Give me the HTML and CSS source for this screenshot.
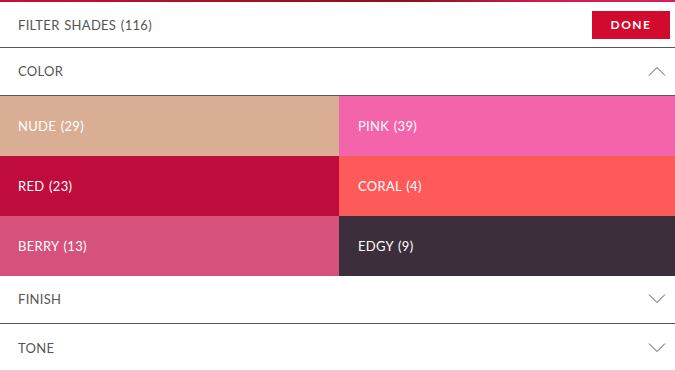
FILE: index.html
```html
<!DOCTYPE html>
<html lang="en">
<head>
    <meta charset="UTF-8">
    <meta name="viewport" content="width=device-width, initial-scale=1.0">
    <title>Filter Shades</title>
    <link rel="stylesheet" href="styles.css">
</head>
<body>
    <div class="strip"></div>
    <header class="top">
        <span class="label">FILTER SHADES (116)</span>
        <button class="done">DONE</button>
    </header>
    <div class="section">
        <span class="label">COLOR</span>
        <svg class="chev" width="18" height="10" viewBox="0 0 18 10"><polyline points="1,9.5 9,1.5 17,9.5" fill="none" stroke="#555" stroke-width="1"/></svg>
    </div>
    <div class="swatches">
        <div class="swatch nude">NUDE (29)</div>
        <div class="swatch pink">PINK (39)</div>
        <div class="swatch red">RED (23)</div>
        <div class="swatch coral">CORAL (4)</div>
        <div class="swatch berry">BERRY (13)</div>
        <div class="swatch edgy">EDGY (9)</div>
    </div>
    <div class="section">
        <span class="label">FINISH</span>
        <svg class="chev" width="18" height="10" viewBox="0 0 18 10"><polyline points="1,0.5 9,8.5 17,0.5" fill="none" stroke="#555" stroke-width="1"/></svg>
    </div>
    <div class="section last">
        <span class="label">TONE</span>
        <svg class="chev" width="18" height="10" viewBox="0 0 18 10"><polyline points="1,0.5 9,8.5 17,0.5" fill="none" stroke="#555" stroke-width="1"/></svg>
    </div>
</body>
</html>
```
FILE: styles.css
```css
*{
    box-sizing: border-box;
    margin: 0;
    padding: 0;
}
body{
    background-color: white;
    color: #555;
    font-family: Lato, "Open Sans", sans-serif;
    font-size: 13px;
    letter-spacing: 0.3px;
    word-spacing: 1px;
}
.strip{
    height: 2px;
    background: linear-gradient(to right, #c8103c, #a01020 40%, #8a1018 60%, #d01a50 80%, #d8205a);
}
.top{
    height: 46px;
    display: flex;
    align-items: center;
    justify-content: space-between;
    padding: 0 5px 0 18px;
    border-bottom: 1px solid #555;
}
.done{
    width: 78px;
    height: 28px;
    background-color: #d20a2e;
    color: white;
    border: none;
    font-family: Lato, sans-serif;
    font-size: 12px;
    font-weight: 700;
    letter-spacing: 1.5px;
}
.section{
    height: 48px;
    display: flex;
    align-items: center;
    justify-content: space-between;
    padding: 0 9px 1px 18px;
    border-bottom: 1px solid #555;
}
.section.last{
    border-bottom: none;
}
.swatches{
    display: grid;
    grid-template-columns: 339px 1fr;
}
.swatch{
    height: 60px;
    display: flex;
    align-items: center;
    padding-left: 18px;
    color: white;
}
.swatch:nth-child(even){
    padding-left: 19px;
}
.nude{ background-color: #d9ae95; }
.pink{ background-color: #f464aa; }
.red{ background-color: #c00c3c; }
.coral{ background-color: #ff5a5a; }
.berry{ background-color: #d6517b; }
.edgy{ background-color: #3d2e3b; }
```
